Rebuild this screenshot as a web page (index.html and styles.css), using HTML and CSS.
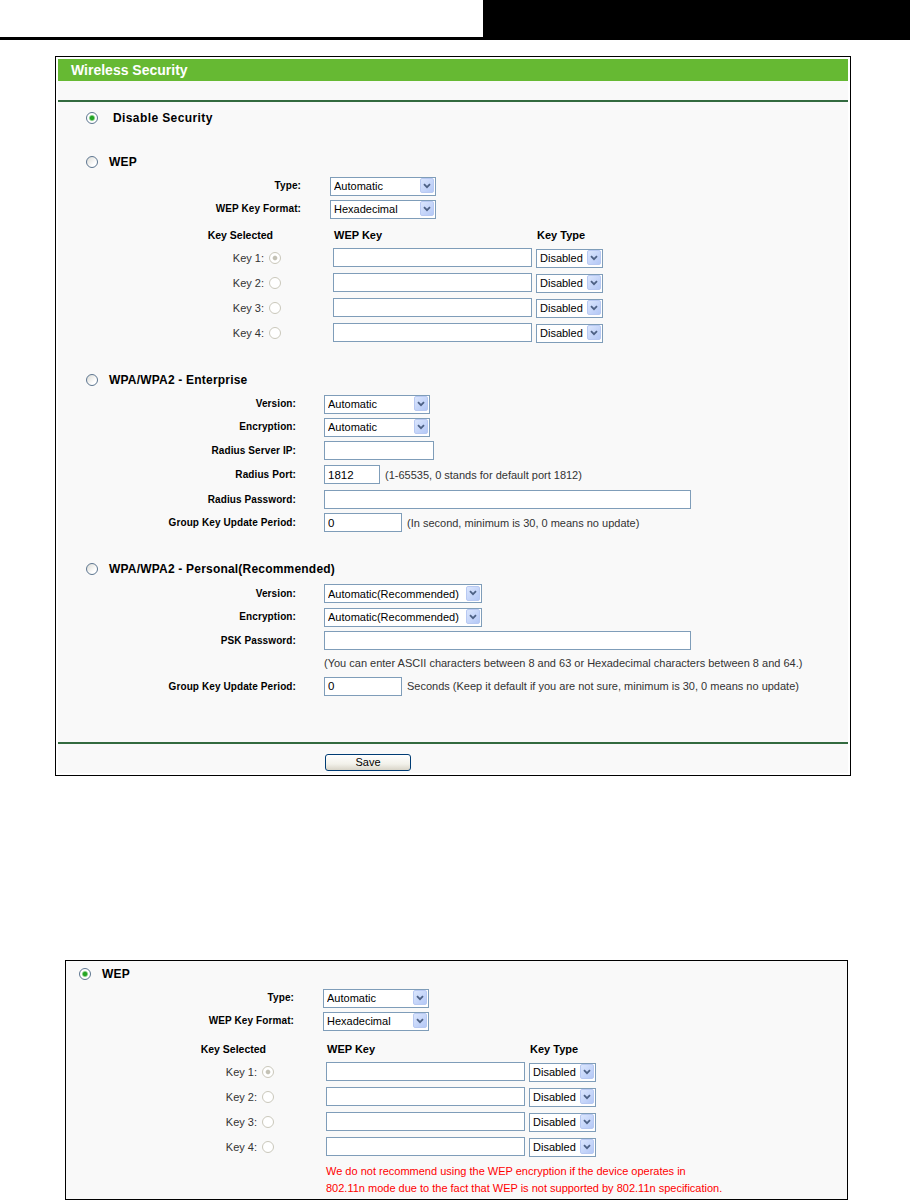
FILE: index.html
```html
<!DOCTYPE html>
<html lang="en">

<head>
    <meta charset="UTF-8">
    <meta name="viewport" content="width=device-width, initial-scale=1.0">
    <title>Wireless Security</title>

    <link rel="stylesheet" href="styles.css">
</head>

<body>
    <div class="page-head">
        <div class="page-head-block"></div>
    </div>

    <div class="panel">
        <div class="panel-inner">
            <div class="panel-title">Wireless Security</div>
            <div class="panel-gap"></div>

            <div class="panel-body">
                <div class="opt opt-first">
                    <span class="radio checked"></span>
                    <span class="opt-text opt-wide">Disable Security</span>
                </div>

                <!-- WEP -->
                <div class="opt opt-section">
                    <span class="radio"></span>
                    <span class="opt-text">WEP</span>
                </div>
                <div class="row row-wep">
                    <span class="lbl">Type:</span>
                    <span class="sel sel-short">
                        <select><option>Automatic</option></select>
                        <i class="sel-arrow"><svg width="8" height="6" viewBox="0 0 8 6"><path d="M1 1.2 L4 4.2 L7 1.2" fill="none" stroke="#4d6185" stroke-width="1.8"/></svg></i>
                    </span>
                </div>
                <div class="row row-wep">
                    <span class="lbl">WEP Key Format:</span>
                    <span class="sel sel-short">
                        <select><option>Hexadecimal</option></select>
                        <i class="sel-arrow"><svg width="8" height="6" viewBox="0 0 8 6"><path d="M1 1.2 L4 4.2 L7 1.2" fill="none" stroke="#4d6185" stroke-width="1.8"/></svg></i>
                    </span>
                </div>

                <div class="keyhead">
                    <span class="keycell keycell-head">Key Selected</span>
                    <span class="keyhead-wep">WEP Key</span>
                    <span class="keyhead-type">Key Type</span>
                </div>
                <div class="keyrow">
                    <span class="keycell">Key 1: <span class="radio disabled checked"></span></span>
                    <input type="text" class="in-key">
                    <span class="sel sel-key">
                        <select><option>Disabled</option></select>
                        <i class="sel-arrow"><svg width="8" height="6" viewBox="0 0 8 6"><path d="M1 1.2 L4 4.2 L7 1.2" fill="none" stroke="#4d6185" stroke-width="1.8"/></svg></i>
                    </span>
                </div>
                <div class="keyrow">
                    <span class="keycell">Key 2: <span class="radio disabled"></span></span>
                    <input type="text" class="in-key">
                    <span class="sel sel-key">
                        <select><option>Disabled</option></select>
                        <i class="sel-arrow"><svg width="8" height="6" viewBox="0 0 8 6"><path d="M1 1.2 L4 4.2 L7 1.2" fill="none" stroke="#4d6185" stroke-width="1.8"/></svg></i>
                    </span>
                </div>
                <div class="keyrow">
                    <span class="keycell">Key 3: <span class="radio disabled"></span></span>
                    <input type="text" class="in-key">
                    <span class="sel sel-key">
                        <select><option>Disabled</option></select>
                        <i class="sel-arrow"><svg width="8" height="6" viewBox="0 0 8 6"><path d="M1 1.2 L4 4.2 L7 1.2" fill="none" stroke="#4d6185" stroke-width="1.8"/></svg></i>
                    </span>
                </div>
                <div class="keyrow">
                    <span class="keycell">Key 4: <span class="radio disabled"></span></span>
                    <input type="text" class="in-key">
                    <span class="sel sel-key">
                        <select><option>Disabled</option></select>
                        <i class="sel-arrow"><svg width="8" height="6" viewBox="0 0 8 6"><path d="M1 1.2 L4 4.2 L7 1.2" fill="none" stroke="#4d6185" stroke-width="1.8"/></svg></i>
                    </span>
                </div>

                <!-- WPA/WPA2 Enterprise -->
                <div class="opt opt-section">
                    <span class="radio"></span>
                    <span class="opt-text">WPA/WPA2 - Enterprise</span>
                </div>
                <div class="row">
                    <span class="lbl">Version:</span>
                    <span class="sel sel-short">
                        <select><option>Automatic</option></select>
                        <i class="sel-arrow"><svg width="8" height="6" viewBox="0 0 8 6"><path d="M1 1.2 L4 4.2 L7 1.2" fill="none" stroke="#4d6185" stroke-width="1.8"/></svg></i>
                    </span>
                </div>
                <div class="row">
                    <span class="lbl">Encryption:</span>
                    <span class="sel sel-short">
                        <select><option>Automatic</option></select>
                        <i class="sel-arrow"><svg width="8" height="6" viewBox="0 0 8 6"><path d="M1 1.2 L4 4.2 L7 1.2" fill="none" stroke="#4d6185" stroke-width="1.8"/></svg></i>
                    </span>
                </div>
                <div class="row row-24">
                    <span class="lbl">Radius Server IP:</span>
                    <input type="text" class="in-ip">
                </div>
                <div class="row row-25">
                    <span class="lbl">Radius Port:</span>
                    <input type="text" class="in-port" value="1812">
                    <span class="hint">(1-65535, 0 stands for default port 1812)</span>
                </div>
                <div class="row row-24">
                    <span class="lbl">Radius Password:</span>
                    <input type="text" class="in-long">
                </div>
                <div class="row">
                    <span class="lbl">Group Key Update Period:</span>
                    <input type="text" class="in-period" value="0">
                    <span class="hint">(In second, minimum is 30, 0 means no update)</span>
                </div>

                <!-- WPA/WPA2 Personal -->
                <div class="opt opt-section">
                    <span class="radio"></span>
                    <span class="opt-text">WPA/WPA2 - Personal(Recommended)</span>
                </div>
                <div class="row row-24">
                    <span class="lbl">Version:</span>
                    <span class="sel sel-long">
                        <select><option>Automatic(Recommended)</option></select>
                        <i class="sel-arrow"><svg width="8" height="6" viewBox="0 0 8 6"><path d="M1 1.2 L4 4.2 L7 1.2" fill="none" stroke="#4d6185" stroke-width="1.8"/></svg></i>
                    </span>
                </div>
                <div class="row">
                    <span class="lbl">Encryption:</span>
                    <span class="sel sel-long">
                        <select><option>Automatic(Recommended)</option></select>
                        <i class="sel-arrow"><svg width="8" height="6" viewBox="0 0 8 6"><path d="M1 1.2 L4 4.2 L7 1.2" fill="none" stroke="#4d6185" stroke-width="1.8"/></svg></i>
                    </span>
                </div>
                <div class="row row-24">
                    <span class="lbl">PSK Password:</span>
                    <input type="text" class="in-long">
                </div>
                <div class="row row-hint">
                    <span class="lbl"></span>
                    <span class="hint hint-flush">(You can enter ASCII characters between 8 and 63 or Hexadecimal characters between 8 and 64.)</span>
                </div>
                <div class="row row-24">
                    <span class="lbl">Group Key Update Period:</span>
                    <input type="text" class="in-period" value="0">
                    <span class="hint">Seconds (Keep it default if you are not sure, minimum is 30, 0 means no update)</span>
                </div>
            </div>

            <div class="panel-foot">
                <button type="button" class="btn">Save</button>
            </div>
        </div>
    </div>

    <div class="panel panel-wep">
        <div class="panel-body">
            <div class="opt opt-top">
                <span class="radio checked"></span>
                <span class="opt-text">WEP</span>
            </div>
            <div class="row row-wep">
                <span class="lbl">Type:</span>
                <span class="sel sel-short">
                    <select><option>Automatic</option></select>
                    <i class="sel-arrow"><svg width="8" height="6" viewBox="0 0 8 6"><path d="M1 1.2 L4 4.2 L7 1.2" fill="none" stroke="#4d6185" stroke-width="1.8"/></svg></i>
                </span>
            </div>
            <div class="row row-wep">
                <span class="lbl">WEP Key Format:</span>
                <span class="sel sel-short">
                    <select><option>Hexadecimal</option></select>
                    <i class="sel-arrow"><svg width="8" height="6" viewBox="0 0 8 6"><path d="M1 1.2 L4 4.2 L7 1.2" fill="none" stroke="#4d6185" stroke-width="1.8"/></svg></i>
                </span>
            </div>

            <div class="keyhead">
                <span class="keycell keycell-head">Key Selected</span>
                <span class="keyhead-wep">WEP Key</span>
                <span class="keyhead-type">Key Type</span>
            </div>
            <div class="keyrow">
                <span class="keycell">Key 1: <span class="radio disabled checked"></span></span>
                <input type="text" class="in-key">
                <span class="sel sel-key">
                    <select><option>Disabled</option></select>
                    <i class="sel-arrow"><svg width="8" height="6" viewBox="0 0 8 6"><path d="M1 1.2 L4 4.2 L7 1.2" fill="none" stroke="#4d6185" stroke-width="1.8"/></svg></i>
                </span>
            </div>
            <div class="keyrow">
                <span class="keycell">Key 2: <span class="radio disabled"></span></span>
                <input type="text" class="in-key">
                <span class="sel sel-key">
                    <select><option>Disabled</option></select>
                    <i class="sel-arrow"><svg width="8" height="6" viewBox="0 0 8 6"><path d="M1 1.2 L4 4.2 L7 1.2" fill="none" stroke="#4d6185" stroke-width="1.8"/></svg></i>
                </span>
            </div>
            <div class="keyrow">
                <span class="keycell">Key 3: <span class="radio disabled"></span></span>
                <input type="text" class="in-key">
                <span class="sel sel-key">
                    <select><option>Disabled</option></select>
                    <i class="sel-arrow"><svg width="8" height="6" viewBox="0 0 8 6"><path d="M1 1.2 L4 4.2 L7 1.2" fill="none" stroke="#4d6185" stroke-width="1.8"/></svg></i>
                </span>
            </div>
            <div class="keyrow">
                <span class="keycell">Key 4: <span class="radio disabled"></span></span>
                <input type="text" class="in-key">
                <span class="sel sel-key">
                    <select><option>Disabled</option></select>
                    <i class="sel-arrow"><svg width="8" height="6" viewBox="0 0 8 6"><path d="M1 1.2 L4 4.2 L7 1.2" fill="none" stroke="#4d6185" stroke-width="1.8"/></svg></i>
                </span>
            </div>

            <p class="warn">We do not recommend using the WEP encryption if the device operates in<br>802.11n mode due to the fact that WEP is not supported by 802.11n specification.</p>
        </div>
    </div>
</body>

</html>
```

FILE: styles.css
```css
body {
    font-family: "Liberation Sans", Arial, sans-serif;
    margin: 0;
    padding: 0;
    background-color: #fff;
    color: #000;
}

/* black bar at the top of the manual page */
.page-head {
    display: flex;
    justify-content: flex-end;
    height: 37px;
    border-bottom: 3px solid #000;
}

.page-head-block {
    width: 427px;
    background: #000;
}

.panel {
    box-sizing: border-box;
    width: 796px;
    margin: 16px 0 0 55px;
    padding: 2px;
    border: 1px solid #000;
    background: #fff;
}

.panel-inner {
    background: #f9f9f9;
}

.panel-title {
    height: 22px;
    line-height: 22px;
    padding-left: 13px;
    background: #66b933;
    color: #fff;
    font-size: 14px;
    font-weight: bold;
}

.panel-gap {
    height: 19px;
    border-bottom: 2px solid #336a3f;
}

.panel-body {
    padding-left: 28px;
}

/* option headings with a radio */
.opt {
    display: flex;
    align-items: center;
    height: 24px;
}

.opt-first {
    margin-top: 4px;
}

.opt-section {
    margin-top: 20px;
}

.row + .opt-section,
.keyrow + .opt-section {
    margin-top: 23px;
}

.opt-text {
    margin-left: 11px;
    font-size: 12px;
    font-weight: bold;
    letter-spacing: 0.2px;
}

.opt-wide {
    margin-left: 15px;
    letter-spacing: 0.4px;
}

.radio {
    box-sizing: border-box;
    display: inline-block;
    width: 12px;
    height: 12px;
    border: 1px solid #5d7690;
    border-radius: 50%;
    background: linear-gradient(135deg, #dcdcd6, #fff 70%);
    flex-shrink: 0;
}

.radio.checked {
    background: radial-gradient(circle, #25a525 0, #25a525 1.8px, #aee0ae 2.8px, #fff 3.6px);
}

.radio.disabled {
    border-color: #cac8bb;
    background: #fff;
}

.radio.disabled.checked {
    background: radial-gradient(circle, #c4c2b6 0, #c4c2b6 1.8px, #fff 2.8px);
}

/* label + control rows */
.row {
    display: flex;
    align-items: center;
    height: 23px;
}

.row-24 {
    height: 24px;
}

.row-25 {
    height: 25px;
}

.row-hint {
    height: 22px;
}

.lbl {
    flex-shrink: 0;
    width: 210px;
    margin-right: 28px;
    text-align: right;
    font-size: 10px;
    font-weight: bold;
    letter-spacing: 0.1px;
}

.row-wep .lbl {
    width: 215px;
    margin-right: 29px;
}

.hint {
    margin-left: 5px;
    font-size: 11px;
    color: #333;
    white-space: nowrap;
}

.hint-flush {
    margin-left: 0;
}

input[type="text"] {
    box-sizing: border-box;
    flex-shrink: 0;
    height: 19px;
    margin: 0;
    padding: 0 3px;
    border: 1px solid #7f9db9;
    border-radius: 0;
    background: #fff;
    font-family: "Liberation Sans", Arial, sans-serif;
    font-size: 11.5px;
    color: #000;
}

.keyrow .in-key {
    width: 199px;
    margin-left: 52px;
}

.row .in-ip {
    width: 110px;
}

.row .in-port {
    width: 56px;
}

.row .in-period {
    width: 78px;
}

.row .in-long {
    width: 367px;
}

/* XP style select */
.sel {
    position: relative;
    display: inline-block;
    flex-shrink: 0;
    height: 19px;
}

.sel select {
    appearance: none;
    -webkit-appearance: none;
    box-sizing: border-box;
    width: 100%;
    height: 19px;
    margin: 0;
    padding: 0 15px 0 3px;
    border: 1px solid #7f9db9;
    border-radius: 0;
    background: #fff;
    font-family: "Liberation Sans", Arial, sans-serif;
    font-size: 11px;
    color: #000;
}

.sel-arrow {
    position: absolute;
    top: 2px;
    right: 2px;
    bottom: 2px;
    width: 14px;
    display: flex;
    align-items: center;
    justify-content: center;
    box-sizing: border-box;
    border: 1px solid #b8c9f2;
    border-radius: 2px;
    background: linear-gradient(135deg, #dbe6fd, #b4c8f6);
    pointer-events: none;
}

.sel-short {
    width: 106px;
}

.sel-long {
    width: 158px;
}

.sel-key {
    width: 67px;
    margin-left: 4px;
}

/* WEP key table */
.keyhead {
    display: flex;
    align-items: center;
    height: 20px;
    margin-top: 5px;
    font-size: 11px;
    font-weight: bold;
}

.keyrow {
    display: flex;
    align-items: center;
    height: 25px;
}

.keycell {
    flex-shrink: 0;
    display: flex;
    align-items: center;
    justify-content: flex-end;
    gap: 5px;
    width: 195px;
    font-size: 11px;
    color: #333;
}

.keycell-head {
    padding-right: 8px;
    box-sizing: border-box;
    font-size: 10.5px;
    color: #000;
}

.keyhead-wep {
    width: 203px;
    margin-left: 52px;
    padding-left: 1px;
    box-sizing: border-box;
}

.keyhead-type {
    padding-left: 1px;
}

.panel-foot {
    height: 31px;
    margin-top: 44px;
    padding: 8px 0 0 267px;
    box-sizing: border-box;
    border-top: 2px solid #336a3f;
}

.btn {
    width: 86px;
    height: 17px;
    padding: 0;
    border: 1px solid #003c74;
    border-radius: 3px;
    background: linear-gradient(#fff, #f2f1ea 60%, #d8d4c8);
    font-family: "Liberation Sans", Arial, sans-serif;
    font-size: 11px;
    color: #000;
    cursor: pointer;
}

/* second screenshot: WEP selected */
.panel-wep {
    width: 783px;
    height: 240px;
    margin: 184px 0 0 65px;
    padding: 0;
    background: #f9f9f9;
}

.panel-wep .panel-body {
    padding-left: 13px;
}

.panel-wep .keyhead {
    margin-top: 7px;
}

.opt-top {
    margin-top: 1px;
}

.warn {
    margin: 4px 0 0 247px;
    font-size: 11px;
    line-height: 17px;
    color: #f00;
}
```
